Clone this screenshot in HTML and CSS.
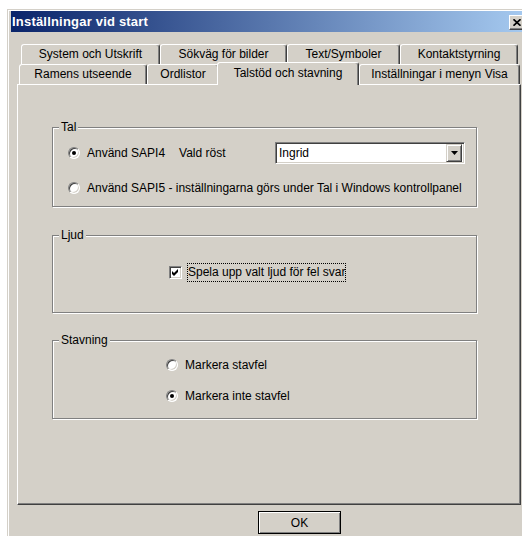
FILE: index.html
```html
<!DOCTYPE html>
<html lang="sv">
<head>
<meta charset="utf-8">
<title>Inställningar vid start</title>
<link rel="stylesheet" href="styles.css">
</head>
<body>
<div class="window">
  <div class="titlebar">
    <span class="title">Inställningar vid start</span>
    <span class="close">
      <svg width="8" height="7" viewBox="0 0 8 7"><path d="M0.5 0.3 L7.5 6.7 M7.5 0.3 L0.5 6.7" stroke="#000" stroke-width="1.7" fill="none"/></svg>
    </span>
  </div>

  <div class="tabctl">
    <div class="tabrow row-back">
      <div class="tab w139">System och Utskrift</div>
      <div class="tab w127">Sökväg för bilder</div>
      <div class="tab w113">Text/Symboler</div>
      <div class="tab w118">Kontaktstyrning</div>
    </div>
    <div class="tabrow row-front">
      <div class="tab w128">Ramens utseende</div>
      <div class="tab w72">Ordlistor</div>
      <div class="tab tab-active w142">Talstöd och stavning</div>
      <div class="tab w161">Inställningar i menyn Visa</div>
    </div>

    <div class="panel">
      <fieldset class="group group-tal">
        <legend class="group-label">Tal</legend>
        <div class="group-body">
          <div class="opt opt-combo">
            <span class="radio checked"></span>
            <span>Använd SAPI4</span>
            <span class="voice-label">Vald röst</span>
            <div class="combo">
              <span class="combo-text">Ingrid</span>
              <span class="combo-btn">
                <svg width="7" height="4" viewBox="0 0 7 4"><path d="M0 0 H7 L3.5 4 Z" fill="#000"/></svg>
              </span>
            </div>
          </div>
          <div class="opt opt-second">
            <span class="radio"></span>
            <span>Använd SAPI5 - inställningarna görs under Tal i Windows kontrollpanel</span>
          </div>
        </div>
      </fieldset>

      <fieldset class="group group-ljud">
        <legend class="group-label">Ljud</legend>
        <div class="group-body">
          <div class="check-row">
            <span class="checkbox">
              <svg width="7" height="7" viewBox="0 0 7 7"><path d="M0 2 L2 4 L6 0 L6 3 L2 7 L0 5 Z" fill="#000"/></svg>
            </span>
            <span class="focus-label">Spela upp valt ljud för fel svar</span>
          </div>
        </div>
      </fieldset>

      <fieldset class="group group-stav">
        <legend class="group-label">Stavning</legend>
        <div class="group-body">
          <div class="opt">
            <span class="radio"></span>
            <span>Markera stavfel</span>
          </div>
          <div class="opt opt-second">
            <span class="radio checked"></span>
            <span>Markera inte stavfel</span>
          </div>
        </div>
      </fieldset>
    </div>
  </div>

  <div class="actions">
    <button class="btn btn-default" type="button">OK</button>
  </div>
</div>
</body>
</html>
```

FILE: styles.css
```css
html, body {
  margin: 0;
  height: 100%;
  overflow: hidden;
  background: #fff;
}

body {
  font: 12px/14px "Liberation Sans", Arial, sans-serif;
  color: #000;
}

/* dialog frame */
.window {
  margin: 9px 0 0 7px;
  width: 516px;
  height: 560px;
  padding: 1px 3px 0;
  background: #d4d0c8;
  border: 1px solid;
  border-color: #d4d0c8 #404040 #404040 #d4d0c8;
  box-shadow: inset 1px 1px #fff, inset -1px -1px #808080;
}

.titlebar {
  height: 21px;
  display: flex;
  align-items: center;
  justify-content: space-between;
  padding: 0 2px 0 1px;
  background: linear-gradient(90deg, #0a246a, #a6caf0);
}

.title {
  color: #fff;
  font-weight: bold;
  font-size: 13px;
  letter-spacing: 0.2px;
}

.close {
  box-sizing: border-box;
  width: 16px;
  height: 15px;
  margin-top: 1px;
  display: flex;
  align-items: center;
  justify-content: center;
  background: #d4d0c8;
  border: 1px solid;
  border-color: #fff #404040 #404040 #fff;
  box-shadow: inset -1px -1px #808080;
}

/* tab control */
.tabctl {
  margin: 12px 0 0 6px;
  width: 504px;
}

.tabrow {
  display: flex;
  align-items: flex-start;
  height: 20px;
}

.row-back { padding-left: 4px; }
.row-front { padding-left: 2px; }

.tab {
  box-sizing: border-box;
  height: 20px;
  flex: none;
  display: flex;
  align-items: center;
  justify-content: center;
  padding-bottom: 1px;
  white-space: nowrap;
  background: #d4d0c8;
  border: 1px solid;
  border-bottom: 0;
  border-color: #fff #404040 transparent #fff;
  border-radius: 3px 3px 0 0;
  box-shadow: inset -1px 0 #808080;
}

.tab-active {
  height: 23px;
  margin: -2px 0 -1px -2px;
  padding-bottom: 3px;
  position: relative;
  z-index: 1;
}

.w72 { width: 72px; }
.w113 { width: 113px; }
.w118 { width: 118px; }
.w127 { width: 127px; }
.w128 { width: 128px; }
.w139 { width: 139px; }
.w142 { width: 142px; }
.w161 { width: 161px; }

.panel {
  box-sizing: border-box;
  height: 421px;
  padding: 35px 0 0 34px;
  border: 1px solid;
  border-color: #fff #404040 #404040 #fff;
  box-shadow: inset -1px -1px #808080;
}

/* group boxes */
.group {
  box-sizing: border-box;
  width: 425px;
  min-width: 0;
  margin: 0;
  padding: 0;
  border: 1px solid #808080;
  box-shadow: inset 1px 1px #fff, 1px 1px #fff;
}

.group-label {
  margin-left: 6px;
  padding: 0 2px;
  background: #d4d0c8;
  line-height: 14px;
}

.group-ljud { margin-top: 21px; }
.group-stav { margin-top: 20px; }

.group-tal .group-body { padding: 8px 11px 10px 15px; }
.group-ljud .group-body { padding: 21px 0 30px 116px; }
.group-stav .group-body { padding: 10px 0 14px 113px; }

.opt {
  display: flex;
  align-items: center;
  gap: 7px;
  height: 16px;
}

.opt-combo { height: 22px; }
.opt-second { margin-top: 15px; }
.group-tal .opt-second { margin-top: 16px; }

.voice-label { margin-left: 7px; }

.radio {
  box-sizing: border-box;
  flex: none;
  width: 12px;
  height: 12px;
  border-radius: 50%;
  display: flex;
  align-items: center;
  justify-content: center;
  background: #fff;
  border: 1px solid;
  border-color: #808080 #fff #fff #808080;
  box-shadow: inset 1px 1px #404040, inset -1px -1px #d4d0c8;
}

.radio.checked::after {
  content: "";
  width: 4px;
  height: 4px;
  border-radius: 50%;
  background: #000;
}

/* combo box */
.combo {
  box-sizing: border-box;
  width: 190px;
  height: 22px;
  margin-left: auto;
  display: flex;
  align-items: center;
  justify-content: space-between;
  padding: 2px 2px 2px 3px;
  background: #fff;
  border: 1px solid;
  border-color: #808080 #fff #fff #808080;
  box-shadow: inset 1px 1px #404040, inset -1px -1px #d4d0c8;
}

.combo-btn {
  box-sizing: border-box;
  width: 16px;
  height: 18px;
  display: flex;
  align-items: center;
  justify-content: center;
  background: #d4d0c8;
  border: 1px solid;
  border-color: #d4d0c8 #404040 #404040 #d4d0c8;
  box-shadow: inset 1px 1px #fff, inset -1px -1px #808080;
}

/* check box */
.check-row {
  display: flex;
  align-items: center;
  gap: 5px;
  height: 19px;
}

.checkbox {
  box-sizing: border-box;
  flex: none;
  width: 13px;
  height: 13px;
  display: flex;
  align-items: center;
  justify-content: center;
  background: #fff;
  border: 1px solid;
  border-color: #808080 #fff #fff #808080;
  box-shadow: inset 1px 1px #404040, inset -1px -1px #d4d0c8;
}

.focus-label {
  padding: 2px 1px;
  line-height: 15px;
  outline: 1px dotted #000;
  outline-offset: -1px;
}

/* bottom buttons */
.actions {
  padding: 6px 0 0 247px;
}

.btn {
  box-sizing: border-box;
  width: 83px;
  height: 23px;
  padding: 0;
  font: inherit;
  color: #000;
  background: #d4d0c8;
  border: 1px solid #000;
  box-shadow: inset 1px 1px #fff, inset -1px -1px #808080;
}
```
